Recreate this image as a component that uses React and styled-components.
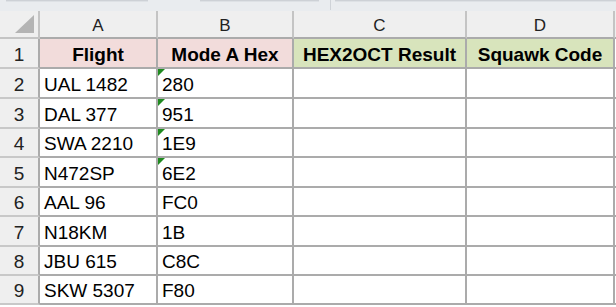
import React from 'react'
import styled, { createGlobalStyle } from 'styled-components';

const GlobalStyle = createGlobalStyle`
    body{
        margin:0;
        background:#ffffff;
        font-family: "Liberation Sans", Arial, sans-serif;
    }
`;

const columns = ['A', 'B', 'C', 'D'];

const headers = [
    { text: 'Flight', bg: '#f2dcdb' },
    { text: 'Mode A Hex', bg: '#f2dcdb' },
    { text: 'HEX2OCT Result', bg: '#d8e4bc' },
    { text: 'Squawk Code', bg: '#d8e4bc' },
];

const rows = [
    { flight: 'UAL 1482', hex: '280', flag: true },
    { flight: 'DAL 377', hex: '951', flag: true },
    { flight: 'SWA 2210', hex: '1E9', flag: true },
    { flight: 'N472SP', hex: '6E2', flag: true },
    { flight: 'AAL 96', hex: 'FC0' },
    { flight: 'N18KM', hex: '1B' },
    { flight: 'JBU 615', hex: 'C8C' },
    { flight: 'SKW 5307', hex: 'F80' },
];

const App = () => {
    return (
        <>
            <GlobalStyle />
            <TopStrip>
                <Field $left={6} $width={142} />
                <Field $left={52} $width={119} />
                <Divider />
                <Field $left={4} $grow />
            </TopStrip>
            <Sheet>
                <Corner>
                    <svg width="20" height="19" viewBox="0 0 20 19">
                        <polygon points="19,0 19,18 0,18" fill="#b4b4b4" />
                    </svg>
                </Corner>
                {columns.map(c => (
                    <ColHead key={c}>{c}</ColHead>
                ))}
                <ColHead $edge />

                <RowHead>1</RowHead>
                {headers.map(h => (
                    <Cell key={h.text} $bg={h.bg} $bold>{h.text}</Cell>
                ))}
                <Cell $edge />

                {rows.map((r, i) => (
                    <React.Fragment key={r.flight}>
                        <RowHead>{i + 2}</RowHead>
                        <Cell>{r.flight}</Cell>
                        <Cell>
                            {r.flag && <ErrorFlag />}
                            {r.hex}
                        </Cell>
                        <Cell />
                        <Cell />
                        <Cell $edge />
                    </React.Fragment>
                ))}
            </Sheet>
        </>
    )
}

const TopStrip = styled.div`
    display:flex;
    height:11px;
    background:#e9ecef;
`;

const Field = styled.div`
    margin-left:${p => p.$left}px;
    width:${p => p.$grow ? 'auto' : `${p.$width}px`};
    flex:${p => p.$grow ? 1 : 'none'};
    height:1px;
    background:#cdd1d6;
    box-shadow: 0 1px 0 #dde1e5;
`;

const Divider = styled.div`
    margin-left:11px;
    width:1px;
    height:10px;
    background:#cfd3d8;
`;

const Sheet = styled.div`
    display:grid;
    grid-template-columns: 40px 118px 136px 173px 148px 1fr;
    grid-template-rows: 28px 30px 30px 30px 29px 30px 29px 30px 29px 29px;
    color:#000;
`;

const Corner = styled.div`
    background:#efefef;
    border-right:2px solid #c4c4c4;
    border-bottom:2px solid #c4c4c4;
    display:flex;
    align-items:flex-end;
    justify-content:flex-end;
    padding:0 3px 3px 0;
`;

const ColHead = styled.div`
    background:#efefef;
    border-right:${p => p.$edge ? 'none' : '2px solid #c4c4c4'};
    border-bottom:2px solid #ababab;
    font-size:17px;
    color:#222;
    display:flex;
    align-items:flex-end;
    justify-content:center;
    line-height:1.1;
    padding-bottom:1px;
`;

const RowHead = styled.div`
    background:#efefef;
    border-right:2px solid #ababab;
    border-bottom:2px solid #c8c8c8;
    font-size:19px;
    color:#222;
    display:flex;
    align-items:flex-end;
    justify-content:center;
    padding-bottom:1px;
`;

const Cell = styled.div`
    position:relative;
    background:${p => p.$bg || '#ffffff'};
    border-right:${p => p.$edge ? 'none' : '2px solid #ababab'};
    border-bottom:2px solid #ababab;
    font-size:19px;
    font-weight:${p => p.$bold ? 700 : 400};
    display:flex;
    align-items:flex-end;
    justify-content:${p => p.$bold ? 'center' : 'flex-start'};
    padding:0 0 1px ${p => p.$bold ? 0 : 4}px;
    white-space:nowrap;
    overflow:hidden;
`;

const ErrorFlag = styled.span`
    position:absolute;
    top:0;
    left:0;
    width:0;
    height:0;
    border-top:7px solid #1f8a1f;
    border-right:7px solid transparent;
`;

export default App;
